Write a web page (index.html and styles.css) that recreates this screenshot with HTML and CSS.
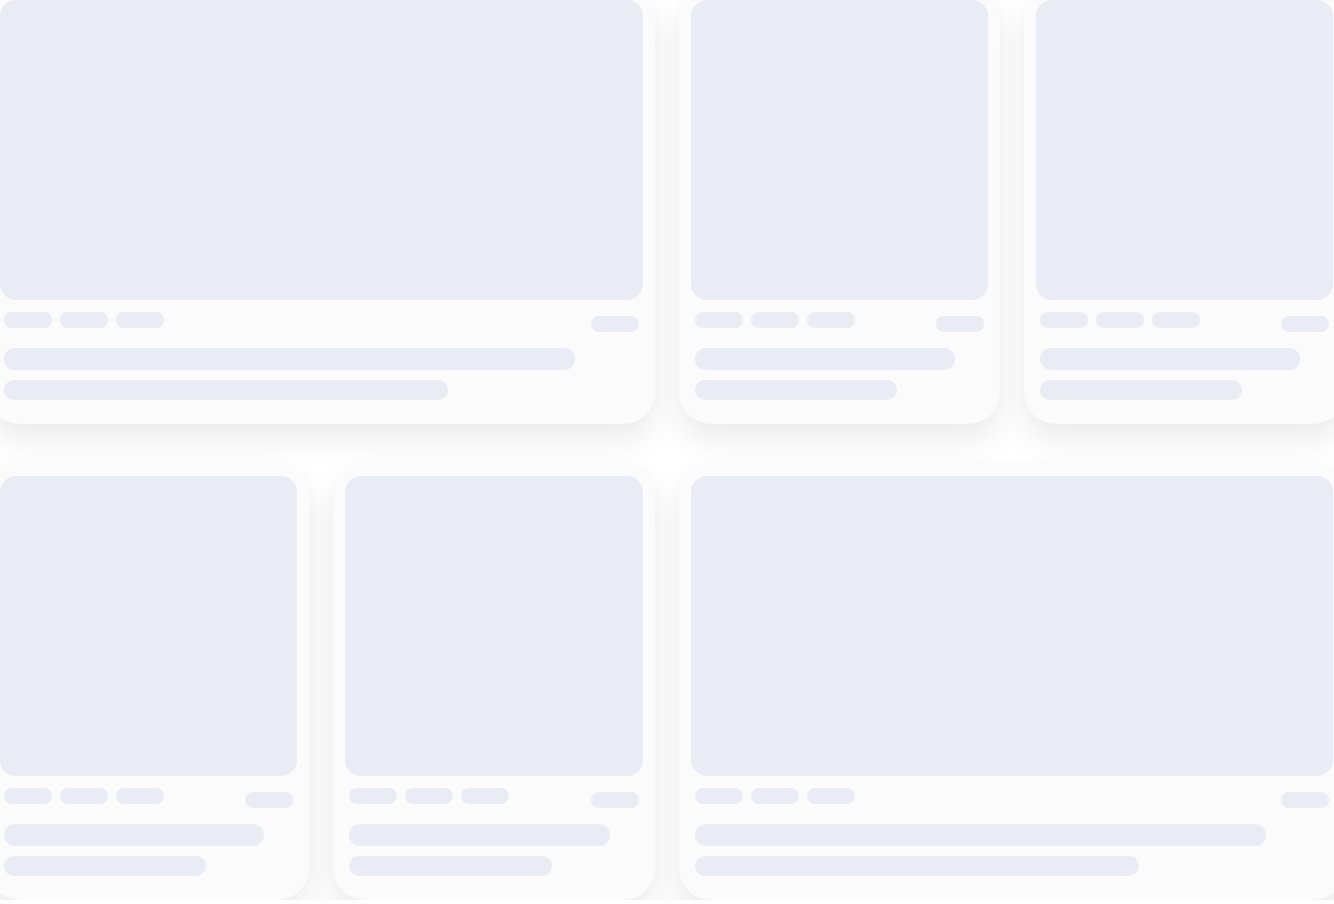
FILE: index.html
```html
<!DOCTYPE html>
<html lang="en">
<head>
<meta charset="utf-8">
<title>Loading cards</title>
<link rel="stylesheet" href="styles.css">
</head>
<body>
<main class="grid">
  <article class="card span-2">
    <div class="media"></div>
    <div class="body">
      <div class="meta">
        <div class="tags"><span class="pill"></span><span class="pill"></span><span class="pill"></span></div>
        <span class="pill pill-end"></span>
      </div>
      <div class="line title"></div>
      <div class="line subtitle"></div>
    </div>
  </article>
  <article class="card">
    <div class="media"></div>
    <div class="body">
      <div class="meta">
        <div class="tags"><span class="pill"></span><span class="pill"></span><span class="pill"></span></div>
        <span class="pill pill-end"></span>
      </div>
      <div class="line title"></div>
      <div class="line subtitle"></div>
    </div>
  </article>
  <article class="card">
    <div class="media"></div>
    <div class="body">
      <div class="meta">
        <div class="tags"><span class="pill"></span><span class="pill"></span><span class="pill"></span></div>
        <span class="pill pill-end"></span>
      </div>
      <div class="line title"></div>
      <div class="line subtitle"></div>
    </div>
  </article>
  <article class="card">
    <div class="media"></div>
    <div class="body">
      <div class="meta">
        <div class="tags"><span class="pill"></span><span class="pill"></span><span class="pill"></span></div>
        <span class="pill pill-end"></span>
      </div>
      <div class="line title"></div>
      <div class="line subtitle"></div>
    </div>
  </article>
  <article class="card">
    <div class="media"></div>
    <div class="body">
      <div class="meta">
        <div class="tags"><span class="pill"></span><span class="pill"></span><span class="pill"></span></div>
        <span class="pill pill-end"></span>
      </div>
      <div class="line title"></div>
      <div class="line subtitle"></div>
    </div>
  </article>
  <article class="card span-2">
    <div class="media"></div>
    <div class="body">
      <div class="meta">
        <div class="tags"><span class="pill"></span><span class="pill"></span><span class="pill"></span></div>
        <span class="pill pill-end"></span>
      </div>
      <div class="line title"></div>
      <div class="line subtitle"></div>
    </div>
  </article>
</main>
</body>
</html>
```
FILE: styles.css
```css
html, body {
  margin: 0;
  padding: 0;
  background: #ffffff;
  overflow: hidden;
  font-family: "Liberation Sans", Arial, sans-serif;
}

.grid {
  display: grid;
  grid-template-columns: repeat(4, 1fr);
  column-gap: 24px;
  row-gap: 40px;
  width: 1357px;
  margin: -12px 0 0 -12px;
}

.card {
  background: #fbfbfb;
  border-radius: 32px;
  padding: 12px;
  box-shadow: 0 16px 32px rgba(0, 0, 0, 0.08), 0 0 16px rgba(0, 0, 0, 0.015);
}

.span-2 {
  grid-column: span 2;
}

.media {
  height: 300px;
  background: #e9ecf5;
  border-radius: 16px;
}

.body {
  padding: 12px 4px 12px;
}

.meta {
  display: flex;
  justify-content: space-between;
  align-items: flex-end;
  height: 20px;
}

.tags {
  display: flex;
  gap: 8px;
  align-self: flex-start;
}

.pill {
  display: block;
  width: 48px;
  height: 16px;
  border-radius: 8px;
  background: #e9ecf5;
}

.line {
  background: #e9ecf5;
}

.title {
  width: 90%;
  height: 22px;
  border-radius: 11px;
  margin-top: 16px;
}

.subtitle {
  width: 70%;
  height: 20px;
  border-radius: 10px;
  margin-top: 10px;
}
```
